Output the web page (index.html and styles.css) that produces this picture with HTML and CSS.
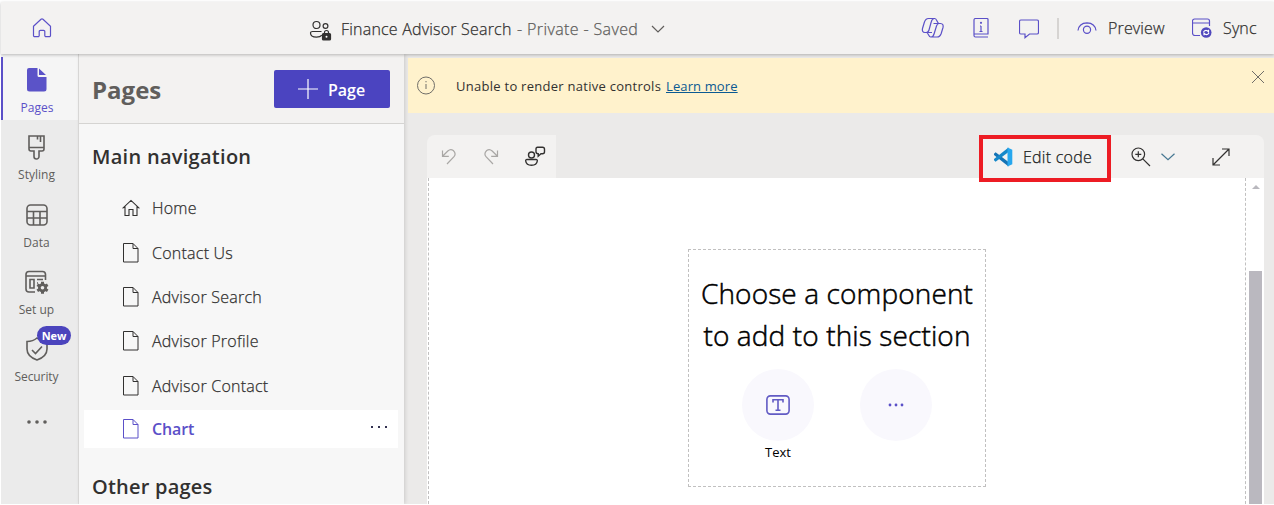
FILE: index.html
```html
<!DOCTYPE html>
<html lang="en">
<head>
<meta charset="utf-8">
<title>Finance Advisor Search</title>
<link rel="stylesheet" href="styles.css">
</head>
<body>
<svg width="0" height="0" class="defs">
  <symbol id="page" viewBox="0 0 18 20"><path d="M1.500 .5H11l5 5v13.500H1.500zM11 .5v5h5" fill="none" stroke="currentColor"/></symbol>
</svg>
<div class="app">
  <header class="topbar">
    <svg class="home" width="20" height="20" viewBox="0 0 20 20"><path d="M1.500 8.300 9 1.300q1-.8 2 0l7.500 7V17.500a1.200 1.200 0 0 1-1.200 1.200H14a1.200 1.200 0 0 1-1.200-1.200v-4a1.200 1.200 0 0 0-1.200-1.200H8.400a1.200 1.200 0 0 0-1.200 1.200v4A1.200 1.200 0 0 1 6 18.700H2.700a1.200 1.200 0 0 1-1.200-1.200z"/></svg>
    <div class="site">
      <svg width="24" height="22" viewBox="0 0 24 22" class="people"><circle cx="7.500" cy="5" r="3.500"/><circle cx="16.500" cy="6" r="2.400"/><path d="M12.500 11.500H3.500Q1.500 11.500 1.500 13c0 3 3 4.200 6 4.200 2.200 0 4.300-.6 5.400-2"/><path d="M15.500 14v-1.500a2 2 0 0 1 4 0V14"/><rect class="fill" x="13.500" y="13.500" width="8" height="6.500" rx="1"/><circle class="hole" cx="17.500" cy="16.800" r="1"/></svg>
      <span class="name">Finance Advisor Search</span><span class="state">- Private - Saved</span>
      <svg width="14" height="8" viewBox="0 0 14 8" class="chev"><path d="m1 1 6 6 6-6"/></svg>
    </div>
    <div class="tools">
      <svg width="24" height="22" viewBox="0 0 24 22"><path d="M7.500 1.500h6.300c2.200 0 2.200 5 4.200 5h1.500c2.500 0 3 2 2.500 4l-1.800 6q-1.200 3.500-4.200 3.500H9.700c-2.200 0-2.200-4.500-4.200-4.500H4C1.500 15.500 1 13.500 1.500 11.500l1.800-6Q4.500 1.500 7.500 1.500zM13.500 1.500Q11 1.500 10.200 5L8 13q-.7 2.500-2.800 2.500M10 20q2.200 0 3.200-3.500L15.500 9q.8-2.500 2.500-2.500M12.500 6.500h5.500M5.500 15.500h5.500"/></svg>
      <svg width="16" height="20" viewBox="0 0 16 20"><path d="M15 15.500V1.500a1 1 0 0 0-1-1H2.500a1.500 1.500 0 0 0-1.500 1.500v15.500A1.500 1.500 0 0 0 2.500 19H15M1 16h14V1M8 8v5.500M7 8h1M6.500 13.500h3"/><circle cx="8" cy="4.800" r=".5"/></svg>
      <svg width="20" height="20" viewBox="0 0 20 20"><path d="M2 1h16q1.500 0 1.500 1.500v11q0 1.500-1.500 1.500h-7.500L6 18.700V15H2Q.5 15 .5 13.500v-11Q.5 1 2 1z"/></svg>
      <i class="rule"></i>
      <svg width="20" height="14" viewBox="0 0 20 14"><path d="M1 9.500Q2 2 10 1.800 18 2 19 9.500"/><circle cx="10" cy="8.700" r="3.600"/></svg>
      <span class="preview">Preview</span>
      <svg width="20" height="20" viewBox="0 0 20 20"><path d="M8 17.500H3A2.500 2.500 0 0 1 .5 15V3A2 2 0 0 1 2.500 1h13a2 2 0 0 1 2 2v5M.5 5h17"/><circle cx="14.200" cy="14.500" r="5.300" class="fill"/><path class="light" d="M11.500 13.800q2.500-3 5 0v-2M17 15.200q-2.500 3-5 0v2"/></svg>
      <span class="sync">Sync</span>
    </div>
  </header>
  <div class="body">
    <nav class="rail">
      <div class="item active"><svg width="22" height="26" viewBox="0 0 22 26"><path class="fill" d="M3 1h8.500v7.500a1.500 1.500 0 0 0 1.500 1.500h7.500v12a2.500 2.500 0 0 1-2.500 2.500H3.500A2.500 2.500 0 0 1 1 22V3a2 2 0 0 1 2-2zM13 1.500 20 8h-7z"/></svg><span>Pages</span></div>
      <div class="item"><svg width="22" height="26" viewBox="0 0 22 26"><path d="M3 2h15v13a2 2 0 0 1-2 2h-3v5.500a2.500 2.500 0 0 1-5 0V17H5a2 2 0 0 1-2-2zM3 13.500h15M11.500 2v3.500M14.500 2v6"/></svg><span>Styling</span></div>
      <div class="item"><svg width="24" height="26" viewBox="0 0 24 26"><rect x="2" y="3" width="20" height="20" rx="3.500"/><path d="M2 9.500h20M2 16h20M8.500 9.500V23M15 9.500V23"/></svg><span>Data</span></div>
      <div class="item"><svg width="25" height="26" viewBox="0 0 25 26"><path d="M11 23H5A3 3 0 0 1 2 20V5.500a3 3 0 0 1 3-3h13.500a3 3 0 0 1 3 3V11M2 7h19.500M6 10.500h4V19H6zM13 10.500h6M13 14h1"/><path class="gear" d="M18.500 12.800v12M13.300 15.800l10.400 6M13.300 21.800l10.400-6"/><circle class="fill" cx="18.500" cy="18.800" r="4.500"/><circle class="hole" cx="18.500" cy="18.800" r="1.800"/></svg><span>Set up</span></div>
      <div class="item security"><svg width="24" height="26" viewBox="0 0 24 26"><path d="M12 2Q16 5.500 22 5.500V13q0 7.500-10 11-10-3.500-10-11V5.500Q8 5.500 12 2zM7 14l3.500 3.500 6.500-7"/></svg><span>Security</span><b class="badge">New</b></div>
      <svg class="more" width="22" height="6" viewBox="0 0 22 6"><circle cx="3" cy="3" r="1.800"/><circle cx="11" cy="3" r="1.800"/><circle cx="19" cy="3" r="1.800"/></svg>
    </nav>
    <aside class="pages">
      <div class="pages-head"><h1>Pages</h1><button><svg width="20" height="20" viewBox="0 0 20 20"><path d="M10 0v20M0 10h20"/></svg><span>Page</span></button></div>
      <h2 class="mainnav">Main navigation</h2>
      <ul>
        <li><svg width="18" height="18" viewBox="0 0 18 18"><path d="m.6 9.400 8.400-8 8.400 8M3 7.500v9h4v-6h4v6h4v-9" fill="none" stroke="currentColor" stroke-width="1.100"/></svg><span>Home</span></li>
        <li><svg width="18" height="20"><use href="#page"/></svg><span>Contact Us</span></li>
        <li><svg width="18" height="20"><use href="#page"/></svg><span>Advisor Search</span></li>
        <li><svg width="18" height="20"><use href="#page"/></svg><span>Advisor Profile</span></li>
        <li><svg width="18" height="20"><use href="#page"/></svg><span>Advisor Contact</span></li>
        <li class="selected"><svg width="18" height="20"><use href="#page"/></svg><span>Chart</span><svg class="dots" width="18" height="4" viewBox="0 0 18 4"><path d="M1 1h2v2H1zM8 1h2v2H8zM15 1h2v2h-2z"/></svg></li>
      </ul>
      <h2 class="other">Other pages</h2>
    </aside>
    <main>
      <div class="banner">
        <svg width="20" height="20" viewBox="0 0 20 20"><circle cx="10" cy="9.500" r="8.500"/><path d="M10 8v5M10 5v1.300"/></svg>
        <span class="msg">Unable to render native controls</span><a>Learn more</a>
        <svg class="close" width="14" height="14" viewBox="0 0 14 14"><path d="m1 1 12 12M13 1 1 13"/></svg>
      </div>
      <div class="workspace">
        <div class="toolbar">
          <div class="group left">
            <svg class="off" width="16" height="18" viewBox="0 0 16 18"><path d="M1.500 2.500v5.800h6.300M1.800 8l5-5Q9.500.5 12.300 2.500 15.500 5.500 13 8.700L6 16"/></svg>
            <svg class="off" width="16" height="18" viewBox="0 0 16 18"><path d="M14.500 2.500v5.800H8.200M14.200 8l-5-5Q6.500.5 3.700 2.500.5 5.500 3 8.700L10 16"/></svg>
            <svg class="feedback" width="22" height="22" viewBox="0 0 22 22"><circle cx="7.500" cy="9" r="3"/><path d="M3 13.500h9q1.500 0 1.300 1.500-.6 4.300-5.800 4.300T1.700 15Q1.500 13.500 3 13.500zM13.500 1.300h5q2 0 2 2v2.400q0 2-2 2H17l-2.800 2.500V7.700q-2.200 0-2.200-2V3q0-1.700 1.500-1.700z"/></svg>
          </div>
          <div class="group right">
            <div class="edit"><svg width="20" height="20" viewBox="0 0 20 20"><path fill="#1473b5" d="M1 6.700 2.600 5.300 15.500 15v4.500L1 8z"/><path fill="#1688c9" d="M1 13.300 2.600 14.800 15.500 5V.5L1 12z"/><path fill="#27a7ee" d="m14.500.5 4.800 2.200v14.600l-4.800 2.200z"/></svg><span>Edit code</span></div>
            <svg class="zoom" width="20" height="20" viewBox="0 0 20 20"><circle cx="7.300" cy="7.300" r="6.300"/><path d="m11.800 11.800 7.200 7.200M7.300 4.300v6M4.300 7.300h6"/></svg>
            <svg class="zchev" width="14" height="8" viewBox="0 0 14 8"><path d="m.5.8 6.500 6 6.500-6"/></svg>
            <svg class="expand" width="18" height="18" viewBox="0 0 18 18"><path d="M1 17 17 1M10 1h7v7M1 10v7h7"/></svg>
          </div>
        </div>
        <div class="canvas">
          <div class="sheet">
            <section class="chooser">
              <p class="l1">Choose a component</p><p class="l2">to add to this section</p>
              <div class="choices">
                <div class="choice"><i><svg width="24" height="20" viewBox="0 0 24 20"><rect x=".9" y=".9" width="22.200" height="18.200" rx="3.500"/><path d="M7 7.500V4.700h10v2.800M12 4.700v10.600M9.500 15.300h5"/></svg></i><span>Text</span></div>
                <div class="choice"><i><svg class="three" width="18" height="4" viewBox="0 0 18 4"><circle cx="3" cy="2" r="1.400"/><circle cx="9" cy="2" r="1.400"/><circle cx="15" cy="2" r="1.400"/></svg></i></div>
              </div>
            </section>
          </div>
          <div class="scroll"><b class="up"></b><b class="thumb"></b></div>
        </div>
      </div>
    </main>
  </div>
</div>
</body>
</html>
```
FILE: styles.css
```css
* { box-sizing: border-box; }
body { margin: 0; background: #fff; font-family: "Open Sans", "Noto Sans", sans-serif; color: #323130; overflow: hidden; }
h1, h2, p, ul { margin: 0; padding: 0; }
svg { display: block; flex: none; }
.defs { position: absolute; }
i { font-style: normal; }
span, a { white-space: nowrap; }
.app { height: 504px; padding: 2px 0 0 1px; display: flex; flex-direction: column; overflow: hidden; }

.topbar { position: relative; z-index: 2; height: 52px; flex: none; background: #f3f2f1; display: flex; align-items: center; box-shadow: 0 1px 3px rgba(0,0,0,.25); font-size: 16px; font-weight: 300; -webkit-text-stroke: .25px; }
.topbar svg { fill: none; stroke: #5b50c8; stroke-width: 1.2; }
.topbar .home { margin-left: 31px; }
.site { display: flex; align-items: center; margin-left: 257px; width: 356px; padding-top: 2px; }
.site .people { stroke: #323130; margin-top: 3px; }
.people .fill { fill: #323130; }
.people .hole { fill: #fff; stroke: none; }
.site .name { margin-left: 8px; width: 176px; letter-spacing: .2px; }
.site .state { width: 121px; color: #605e5c; letter-spacing: .38px; }
.site .chev { margin-left: 13px; stroke: #605e5c; }
.tools { display: flex; align-items: center; margin-left: 256px; }
.tools svg:nth-child(2) { margin-left: 28px; }
.tools svg:nth-child(3) { margin: 2px 0 0 30px; }
.rule { width: 2px; height: 21px; background: #d6d4d2; margin: 0 18px; }
.tools .preview { margin-left: 11px; width: 84px; letter-spacing: .15px; }
.tools .fill { fill: #5048bd; stroke: none; }
.tools .light { stroke: #fff; }
.tools .sync { margin-left: 11px; letter-spacing: .15px; }

.body { flex: 1; display: flex; min-height: 0; }
.rail { width: 78px; flex: none; background: #ebebeb; border-right: 1px solid #dedddc; display: flex; flex-direction: column; align-items: center; padding-top: 3px; }
.item { position: relative; width: 100%; height: 67.300px; flex: none; display: flex; flex-direction: column; align-items: center; padding-top: 10px; font-size: 12px; line-height: 17px; color: #605e5c; padding-right: 6px; }
.item svg { fill: none; stroke: #605e5c; stroke-width: 1.600; }
.item span { margin-top: 6px; }
.item .fill { fill: #605e5c; stroke: none; }
.item .gear { stroke-width: 3; }
.item .hole { fill: #ebebeb; stroke: none; }
.active { background: #f5f5f5; color: #5b50c8; box-shadow: inset 2px 0 #5b50c8, 0 -3px #f5f5f5; height: 63px; margin-bottom: 4.300px; }
.active .fill { fill: #5b53c8; }
.active span { padding-left: 1px; }
.security { letter-spacing: -.1px; }
.badge { position: absolute; left: 36px; top: 0; width: 34px; height: 19px; border-radius: 10px; background: #4b44bd; color: #fff; font-size: 11px; line-height: 19px; text-align: center; }
.more { margin: 26px 6px 0 0; fill: #605e5c; }

.pages { width: 325px; flex: none; background: #f7f7f7; position: relative; z-index: 1; box-shadow: 1px 0 4px rgba(0,0,0,.14); }
.pages-head { height: 70px; background: #f3f2f1; border-bottom: 1px solid #d5d4d2; display: flex; align-items: center; justify-content: space-between; padding: 1px 14px 0 13px; }
h1 { font-size: 24px; line-height: 34px; font-weight: 700; color: #605e5c; padding-top: 1px; }
.pages button { width: 116px; height: 38px; border: 0; border-radius: 2px; background: #4b44c0; color: #fff; font: 600 16px "Open Sans", sans-serif; display: flex; align-items: center; gap: 10px; padding: 0 0 0 24px; }
.pages button span { padding-top: 2px; }
.pages button svg { stroke: #fff; stroke-width: 1.200; }
h2 { font-size: 20px; line-height: 28px; font-weight: 600; padding-left: 13px; letter-spacing: .28px; }
.mainnav { margin-top: 19px; }
.pages ul { list-style: none; margin: 15px 6px 0 5px; }
.pages li { height: 44.400px; display: flex; align-items: center; padding-left: 38px; font-size: 16px; font-weight: 300; -webkit-text-stroke: .25px; letter-spacing: .24px; }
.pages li span { margin-left: 12px; }
.pages .selected { background: #fff; height: 38px; margin-top: 2px; color: #5b50c8; font-weight: 600; -webkit-text-stroke: 0; letter-spacing: -.1px; }
.pages .selected span { padding-top: 1px; }
.dots { margin: -4px 10px 0 auto; fill: #323150; }
.other { margin-top: 25px; letter-spacing: .22px; }

main { flex: 1; min-width: 0; background: #ebeae9; padding: 4px 0 0 4px; display: flex; flex-direction: column; }
.banner { height: 55px; flex: none; background: #fff2cc; display: flex; align-items: center; padding-left: 8px; font-size: 13px; color: #323130; }
.banner svg { fill: none; stroke: #706e68; }
.banner .msg { margin-left: 20px; width: 210px; letter-spacing: .27px; }
.banner a { color: #0b5a92; text-decoration: underline; letter-spacing: .12px; }
.banner .close { margin: -17px 9px 0 auto; }
.workspace { flex: 1; min-height: 0; display: flex; flex-direction: column; margin: 22px 10px 0 19px; }
.toolbar { height: 43px; flex: none; display: flex; justify-content: space-between; }
.group { background: #f3f2f1; display: flex; align-items: center; }
.left { width: 129px; border-radius: 8px 0 0 0; padding-left: 14px; gap: 26px; }
.group svg { fill: none; stroke: #323130; stroke-width: 1.200; }
.left .off { stroke: #a9a7a5; }
.left .feedback { margin-left: -1px; stroke-width: 1.400; }
.right { width: 285px; border-radius: 0 8px 0 0; }
.edit { position: relative; z-index: 3; width: 132px; height: 47px; flex: none; align-self: flex-start; border: 4px solid #ed1c24; display: flex; align-items: center; padding: 0 0 4px 10px; font-size: 16px; font-weight: 300; -webkit-text-stroke: .25px; letter-spacing: .25px; color: #201f1e; }
.group .edit svg { stroke: none; }
.edit span { margin-left: 10px; }
.right .zoom { margin-left: 20px; }
.right .zchev { margin-left: 10px; stroke: #467792; }
.right .expand { margin-left: 37px; }
.canvas { flex: 1; min-height: 0; background: #fff; display: flex; padding-left: 1px; }
.sheet { width: 818px; border: dashed #c1c0c0; border-width: 0 1px; padding: 71px 0 0 259px; }
.chooser { width: 298px; height: 238px; border: 1px dashed #c1c0c0; text-align: center; color: #000; padding-top: 22px; }
.chooser p { font-size: 28px; line-height: 42px; font-weight: 300; -webkit-text-stroke: .5px; white-space: nowrap; letter-spacing: .12px; }
.choices { display: flex; justify-content: center; gap: 46px; margin-top: 13px; }
.choice { width: 72px; font-size: 13px; line-height: 22px; }
.choice i { width: 72px; height: 72px; border-radius: 50%; background: #f9f8fd; display: flex; align-items: center; justify-content: center; }
.choice svg { fill: none; stroke: #625bc4; stroke-width: 1.600; }
.choice .three { fill: #5b50c8; stroke: none; }
.scroll { flex: 1; display: flex; flex-direction: column; padding: 7px 2px 0 3px; align-items: center; }
.up { border: 4px solid transparent; border-top: 0; border-bottom: 4px solid #b9b8be; }
.thumb { width: 13px; flex: 1; background: #bab8bf; margin-top: 82px; }
```
